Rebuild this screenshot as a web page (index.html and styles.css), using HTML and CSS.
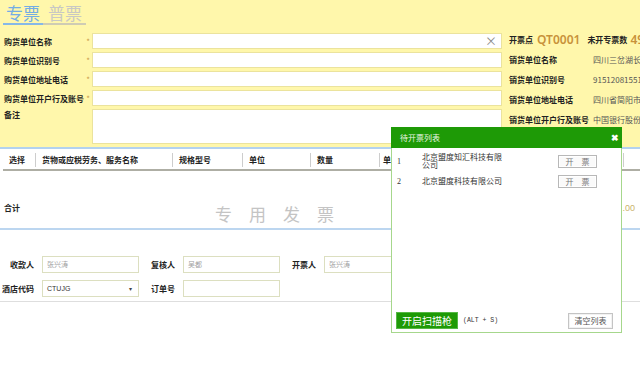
FILE: index.html
```html
<!DOCTYPE html>
<html lang="zh-CN">
<head>
  <meta charset="UTF-8" />
  <meta name="viewport" content="width=device-width, initial-scale=1.0" />
  <title>开具发票</title>
  <link rel="stylesheet" href="styles.css">
</head>
<body>
  <div class="top">
    <div class="tabs">
      <span class="tab active">专票</span>
      <span class="tab">普票</span>
    </div>

    <div class="head">
      <div class="buyer">
        <div class="row">
          <label>购货单位名称</label><span class="star">*</span>
          <div class="field"><span class="clear">&times;</span></div>
        </div>
        <div class="row">
          <label>购货单位识别号</label><span class="star">*</span>
          <div class="field"></div>
        </div>
        <div class="row">
          <label>购货单位地址电话</label><span class="star">*</span>
          <div class="field"></div>
        </div>
        <div class="row">
          <label>购货单位开户行及账号</label><span class="star">*</span>
          <div class="field"></div>
        </div>
        <div class="row note">
          <label>备注</label><span class="star"></span>
          <div class="field tall"></div>
        </div>
      </div>

      <div class="seller">
        <div class="info-row">
          <b>开票点</b>
          <span class="gold first">QT0001</span>
          <b class="count-label">未开专票数</b>
          <span class="gold">49</span>
        </div>
        <div class="info-row">
          <b class="key">销货单位名称</b>
          <span class="val">四川三岔湖长岛国际旅游度假中心有限公司</span>
        </div>
        <div class="info-row">
          <b class="key">销货单位识别号</b>
          <span class="val">915120815517364209</span>
        </div>
        <div class="info-row">
          <b class="key">销货单位地址电话</b>
          <span class="val">四川省简阳市三岔镇长岛</span>
        </div>
        <div class="info-row">
          <b class="key">销货单位开户行及账号</b>
          <span class="val">中国银行股份有限公司简阳支行</span>
        </div>
      </div>
    </div>
  </div>

  <div class="grid">
    <div class="thead">
      <span class="th c1">选择</span>
      <span class="th c2">货物或应税劳务、服务名称</span>
      <span class="th c3">规格型号</span>
      <span class="th c4">单位</span>
      <span class="th c5">数量</span>
      <span class="th c6">单价</span>
      <span class="th c7">金额</span>
    </div>
    <div class="tbody">
      <div class="total">
        <b class="total-label">合计</b>
        <span class="stamp">专用发票</span>
        <span class="amount">.00</span>
      </div>
    </div>
  </div>

  <div class="sign">
    <div class="srow">
      <b class="slabel">收款人</b>
      <div class="sinput">张兴涛</div>
      <b class="slabel wide">复核人</b>
      <div class="sinput">吴都</div>
      <b class="slabel wide">开票人</b>
      <div class="sinput">张兴涛</div>
    </div>
    <div class="srow">
      <b class="slabel">酒店代码</b>
      <div class="sinput select"><span class="code">CTUJG</span><span class="caret">&#9662;</span></div>
      <b class="slabel wide">订单号</b>
      <div class="sinput"></div>
    </div>
  </div>

  <div class="popup">
    <div class="popup-head">
      <span>待开票列表</span>
      <span class="close">&#10006;</span>
    </div>
    <div class="popup-body">
      <div class="item">
        <span class="num">1</span>
        <span class="name">北京盟度知汇科技有限公司</span>
        <button class="open-btn">开 票</button>
      </div>
      <div class="item">
        <span class="num">2</span>
        <span class="name">北京盟度科技有限公司</span>
        <button class="open-btn">开 票</button>
      </div>

      <div class="popup-foot">
        <button class="scan-btn">开启扫描枪</button>
        <span class="hotkey">(ALT + S)</span>
        <button class="empty-btn">清空列表</button>
      </div>
    </div>
  </div>
</body>
</html>
```

FILE: styles.css
```css
* {
  box-sizing: border-box;
}

html,
body {
  margin: 0;
  overflow: hidden;
}

body {
  position: relative;
  width: 640px;
  height: 365px;
  font-family: "Noto Sans CJK SC", "Liberation Sans", sans-serif;
  font-size: 8px;
  color: #333;
  background-color: #fff;
}

b {
  font-weight: bold;
  color: #222;
}

/* top yellow area */
.top {
  height: 147px;
  background-color: #fff7ab;
}

.tabs {
  display: flex;
  height: 27px;
  padding: 2px 0 0 3px;
}

.tab {
  font-size: 17px;
  line-height: 21px;
  height: 23px;
  padding: 0 4px 0 5px;
  color: #c8c8c4;
  border-bottom: 2px solid #cfccb4;
}

.tab.active {
  padding: 0 3px;
  color: #74ade4;
  border-bottom-color: #86b8e8;
}

.head {
  display: flex;
}

.buyer {
  width: 502px;
  padding: 6px 0 0 4px;
}

.row {
  display: flex;
  align-items: center;
  height: 16px;
  margin-bottom: 3px;
}

.row label {
  width: 80px;
  font-weight: bold;
  color: #222;
}

.star {
  width: 8px;
  text-align: center;
  color: #c9994c;
}

.field {
  flex: 1;
  height: 16px;
  display: flex;
  align-items: center;
  justify-content: flex-end;
  padding-right: 4px;
  background-color: #fff;
  border: 1px solid #ebe39d;
}

.field.tall {
  height: 35px;
}

.row.note {
  height: 35px;
  align-items: flex-start;
}

.row.note label {
  line-height: 12px;
}

.clear {
  font-size: 12px;
  line-height: 12px;
  color: #8a8a8a;
}

.seller {
  flex: 1;
  overflow: hidden;
  padding: 2px 0 0 7px;
  white-space: nowrap;
}

.info-row {
  display: flex;
  align-items: center;
  height: 20px;
}

.key {
  flex: none;
  width: 84px;
}

.val {
  color: #555;
}

.gold {
  font-family: "Noto Sans", "Liberation Sans", sans-serif;
  font-size: 12px;
  font-weight: 600;
  color: #c8923a;
  margin-left: 3px;
}

.gold.first {
  margin-left: 4px;
  margin-right: 7px;
}

/* goods table */
.grid {
  padding-left: 3px;
  border-top: 2px solid #b3d2ef;
  border-bottom: 2px solid #bcd6f0;
}

.thead {
  display: flex;
  align-items: center;
  height: 22px;
  padding-top: 2px;
  border-bottom: 2px solid #aeaea4;
  white-space: nowrap;
}

.th {
  flex: none;
  height: 14px;
  line-height: 14px;
  padding-left: 6px;
  font-weight: bold;
  color: #222;
  border-left: 1px solid #cdcdcd;
}

.c1 { width: 32px; border-left: 0; }
.c2 { width: 137px; }
.c3 { width: 70px; }
.c4 { width: 68px; }
.c5 { width: 69px; }
.c6 { width: 244px; padding-left: 3px; }
.c7 { width: 60px; padding-left: 24px; }

.tbody {
  height: 57px;
  padding-top: 28px;
}

.total {
  display: flex;
  align-items: flex-start;
  padding: 0 5px 0 1px;
}

.total-label {
  line-height: 18px;
}

.stamp {
  margin: 6px 0 0 195px;
  font-size: 17px;
  line-height: 18px;
  letter-spacing: 17px;
  color: #c4c4c4;
}

.amount {
  margin-left: auto;
  font-family: "Liberation Sans", sans-serif;
  font-size: 9px;
  line-height: 18px;
  color: #c9b46c;
}

/* signature fields */
.sign {
  padding: 26px 0 4px;
  border-bottom: 1px solid #dedede;
}

.srow {
  display: flex;
  align-items: center;
  height: 17px;
  margin-bottom: 7px;
}

.srow:last-child {
  margin-bottom: 0;
}

.slabel {
  width: 34px;
  margin-right: 8px;
  text-align: right;
}

.slabel.wide {
  width: 36px;
}

.sinput {
  width: 97px;
  height: 17px;
  line-height: 15px;
  padding-left: 4px;
  font-size: 7px;
  color: #a0a0a0;
  background-color: #fff;
  border: 1px solid #dcdfc0;
}

.sinput.select {
  display: flex;
  justify-content: space-between;
  padding-right: 6px;
}

.code {
  font-family: "Liberation Sans", sans-serif;
  color: #333;
}

.caret {
  font-size: 6px;
  color: #444;
}

/* pending invoice popup */
.popup {
  position: absolute;
  left: 391px;
  top: 127px;
  width: 231px;
  height: 206px;
  display: flex;
  flex-direction: column;
  background-color: #fff;
}

.popup-head {
  display: flex;
  align-items: center;
  justify-content: space-between;
  height: 21px;
  padding: 0 3px 0 9px;
  color: #eaf6e2;
  background-color: #1e9a06;
}

.close {
  font-size: 9px;
  font-weight: bold;
  color: #fff;
}

.popup-body {
  flex: 1;
  display: flex;
  flex-direction: column;
  padding-top: 3px;
  border: 1px solid #a6d78c;
  border-top: 0;
}

.item {
  display: flex;
  align-items: center;
  height: 20px;
}

.num {
  width: 30px;
  padding-left: 5px;
  font-family: "Liberation Serif", serif;
  color: #333;
}

.name {
  width: 80px;
  line-height: 8px;
  color: #333;
}

button {
  font-family: "Noto Sans CJK SC", "Liberation Sans", sans-serif;
  padding: 0;
  cursor: pointer;
}

.open-btn {
  margin: 0 24px 0 auto;
  width: 39px;
  height: 13px;
  font-size: 8px;
  line-height: 11px;
  letter-spacing: 3px;
  text-indent: 3px;
  color: #777;
  background-color: #fafafa;
  border: 1px solid #b8b8b8;
  box-shadow: inset 0 0 0 1px #fff;
}

.popup-foot {
  display: flex;
  align-items: center;
  margin-top: auto;
  padding: 0 8px 3px 4px;
}

.scan-btn {
  width: 62px;
  height: 17px;
  font-size: 10px;
  line-height: 15px;
  color: #fff;
  background-color: #1e9a06;
  border: 1px solid #55b844;
}

.hotkey {
  margin-left: 5px;
  font-family: "Liberation Mono", monospace;
  font-size: 6.5px;
  color: #333;
}

.empty-btn {
  margin-left: auto;
  width: 45px;
  height: 16px;
  font-size: 8px;
  line-height: 14px;
  color: #555;
  background-color: #fff;
  border: 1px solid #c4c4c4;
  box-shadow: inset 0 0 0 1px #f2f2f2;
}
```
